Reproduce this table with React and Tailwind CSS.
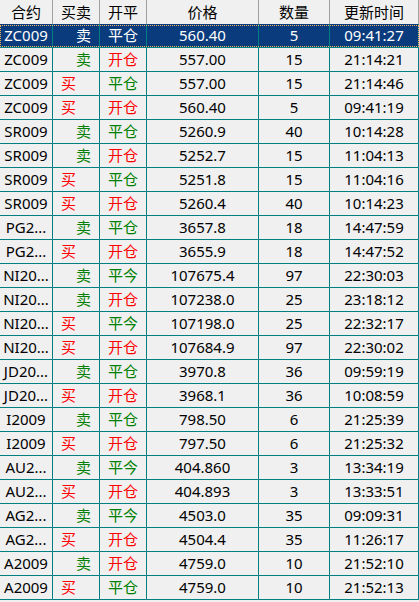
import React from "react";

const rows = [
  ["ZC009", "卖", "平仓", "560.40", "5", "09:41:27"],
  ["ZC009", "卖", "开仓", "557.00", "15", "21:14:21"],
  ["ZC009", "买", "平仓", "557.00", "15", "21:14:46"],
  ["ZC009", "买", "开仓", "560.40", "5", "09:41:19"],
  ["SR009", "卖", "平仓", "5260.9", "40", "10:14:28"],
  ["SR009", "卖", "开仓", "5252.7", "15", "11:04:13"],
  ["SR009", "买", "平仓", "5251.8", "15", "11:04:16"],
  ["SR009", "买", "开仓", "5260.4", "40", "10:14:23"],
  ["PG2...", "卖", "平仓", "3657.8", "18", "14:47:59"],
  ["PG2...", "买", "开仓", "3655.9", "18", "14:47:52"],
  ["NI20...", "卖", "平今", "107675.4", "97", "22:30:03"],
  ["NI20...", "卖", "开仓", "107238.0", "25", "23:18:12"],
  ["NI20...", "买", "平今", "107198.0", "25", "22:32:17"],
  ["NI20...", "买", "开仓", "107684.9", "97", "22:30:02"],
  ["JD20...", "卖", "平仓", "3970.8", "36", "09:59:19"],
  ["JD20...", "买", "开仓", "3968.1", "36", "10:08:59"],
  ["I2009", "卖", "平仓", "798.50", "6", "21:25:39"],
  ["I2009", "买", "开仓", "797.50", "6", "21:25:32"],
  ["AU2...", "卖", "平今", "404.860", "3", "13:34:19"],
  ["AU2...", "买", "开仓", "404.893", "3", "13:33:51"],
  ["AG2...", "卖", "平今", "4503.0", "35", "09:09:31"],
  ["AG2...", "买", "开仓", "4504.4", "35", "11:26:17"],
  ["A2009", "卖", "开仓", "4759.0", "10", "21:52:10"],
  ["A2009", "买", "平仓", "4759.0", "10", "21:52:13"],
];

const headers = ["合约", "买卖", "开平", "价格", "数量", "更新时间"];

const cols = "grid grid-cols-[53px_47px_47px_112px_71px_89px]";
const cell = "h-[24px] flex items-center border-r border-b border-[#008080] whitespace-nowrap overflow-hidden";

const App = () => {
  return (
    <div
      className="w-[419px] h-[602px] bg-[#f0f0f0] text-black text-[15px] overflow-hidden"
      style={{ fontFamily: '"Noto Sans", "Noto Sans CJK SC", sans-serif' }}
    >
      {/* Header */}
      <div className={cols}>
        {headers.map((h) => (
          <div
            key={h}
            className="h-[24px] flex items-center justify-center border-r border-[#a0a0a0] bg-[#f0f0f0] leading-none"
          >
            {h}
          </div>
        ))}
      </div>

      {/* Rows */}
      {rows.map((r, i) => {
        const sel = i === 0;
        const sideColor = sel ? "text-white" : r[1] === "买" ? "text-[#ff0000]" : "text-[#008000]";
        const openColor = sel ? "text-white" : r[2] === "开仓" ? "text-[#ff0000]" : "text-[#008000]";
        return (
          <div
            key={i}
            className={`${cols} relative ${sel ? "bg-[#0a3b7c] text-white" : ""}`}
          >
            <div className={`${cell} justify-center leading-none`}>{r[0]}</div>
            <div
              className={`${cell} leading-none ${sideColor} ${
                r[1] === "买" ? "justify-start pl-[8px]" : "justify-end pr-[8px]"
              }`}
            >
              {r[1]}
            </div>
            <div className={`${cell} justify-center leading-none ${openColor}`}>{r[2]}</div>
            <div className={`${cell} justify-center leading-none`}>{r[3]}</div>
            <div className={`${cell} justify-center leading-none`}>{r[4]}</div>
            <div className={`${cell} justify-center leading-none`}>{r[5]}</div>
            {sel && (
              <div className="absolute left-0 right-0 top-[1px] bottom-[1px] border border-dotted border-[#f2b35a] pointer-events-none"></div>
            )}
          </div>
        );
      })}
    </div>
  );
};

export default App;
